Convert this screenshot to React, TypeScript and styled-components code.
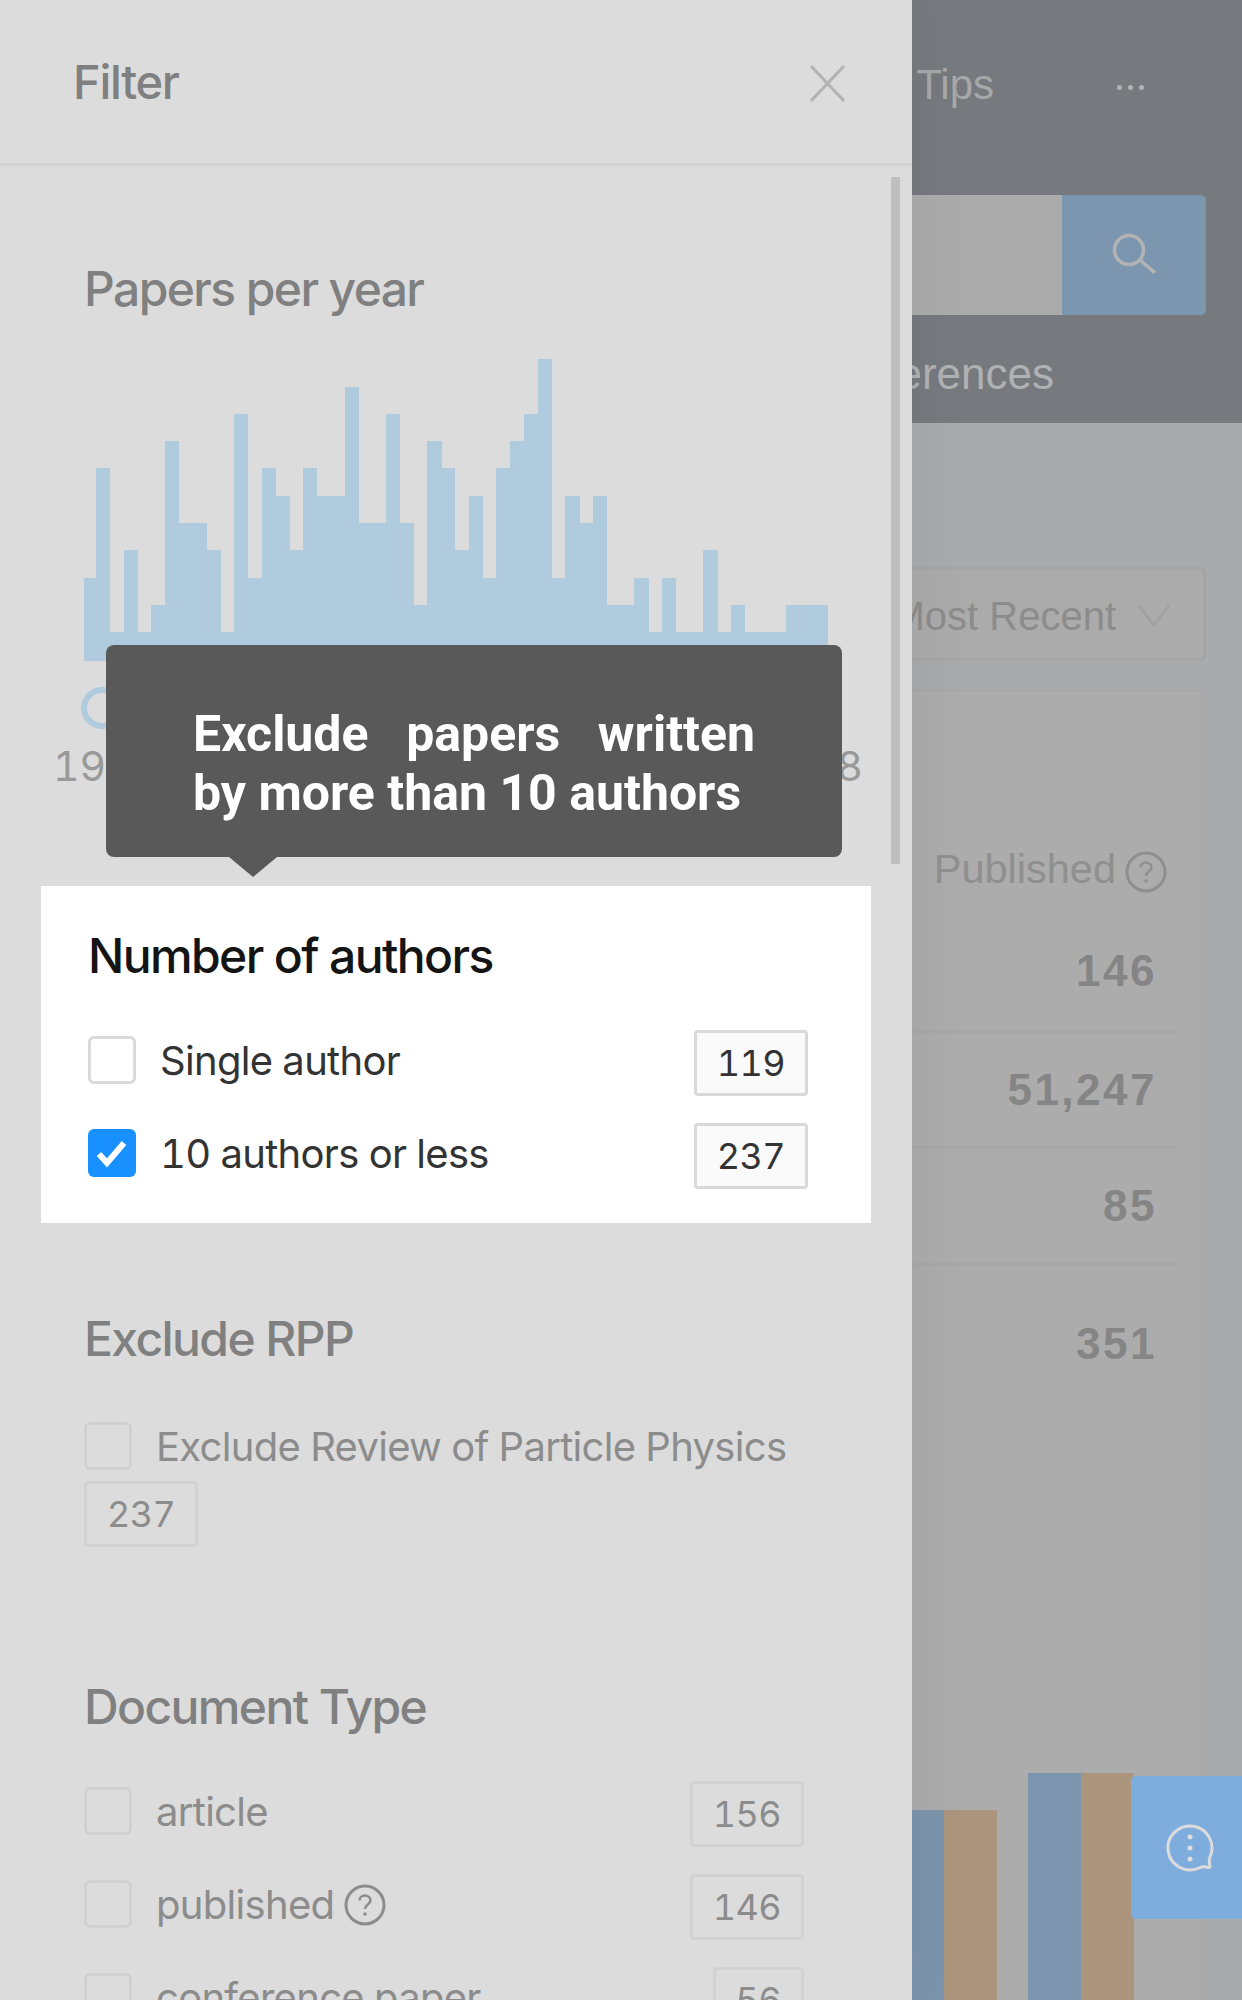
import React from "react"
import styled, { createGlobalStyle } from "styled-components"

const GlobalStyle = createGlobalStyle`
    html, body {
        margin: 0;
        padding: 0;
        background: #a9aaac;
    }
    * {
        box-sizing: border-box;
    }
`

const HISTOGRAM = [
    3, 7, 1, 4, 1, 2, 8, 5, 5, 4, 1, 9, 3, 7, 6, 4, 7, 6, 6, 10, 5, 5, 9, 5, 2, 8, 7,
    4, 6, 3, 7, 8, 9, 11, 3, 6, 5, 6, 2, 2, 3, 1, 3, 1, 1, 4, 1, 2, 1, 1, 1, 2, 2, 2,
]
const BIN_WIDTH = 13.8

const Page = styled.div`
    position: relative;
    width: 1242px;
    height: 2000px;
    overflow: hidden;
    font-family: "Liberation Sans", Arial, sans-serif;
`

/* page behind the drawer */
const BackHeader = styled.header`
    height: 423px;
    background: #767a7e;
`

const TopNav = styled.nav`
    height: 170px;
    display: flex;
    align-items: center;
    justify-content: flex-end;
    gap: 123px;
    padding-right: 98px;
`

const NavLink = styled.span`
    font-size: 42px;
    color: #a6a8a9;
`

const Dots = styled.span`
    display: flex;
    gap: 6px;
    margin-top: 4px;

    i {
        width: 5px;
        height: 5px;
        border-radius: 50%;
        background: #b4b4b4;
    }
`

const SearchBar = styled.div`
    height: 120px;
    margin-top: 25px;
    padding-right: 36px;
    display: flex;
`

const SearchInput = styled.div`
    flex: 1;
    background: #ababab;
`

const SearchButton = styled.div`
    width: 144px;
    background: #7c96af;
    border-radius: 0 5px 5px 0;
    display: flex;
    align-items: center;
    justify-content: center;
`

const BackTitle = styled.div`
    margin-top: 29px;
    padding-right: 188px;
    text-align: right;
    font-size: 44px;
    line-height: 60px;
    color: #b0b1b2;
`

const BackMain = styled.main`
    height: 1577px;
    background: #a9aaac;
    display: flex;
    flex-direction: column;
`

const SortSelect = styled.div`
    height: 94px;
    width: 500px;
    margin: 144px 36px 0 auto;
    padding: 4px 33px 0 0;
    border: 3px solid #a5a5a5;
    border-radius: 5px;
    display: flex;
    align-items: center;
    justify-content: flex-end;
    gap: 22px;
    font-size: 40px;
    color: #8c8c8c;
    background: #ababab;
`

const TableCard = styled.section`
    flex: 1;
    margin: 29px 39px 0 0;
    background: #acacac;
    border: solid #a7a7a7;
    border-width: 2px 2px 0 0;
    display: flex;
    flex-direction: column;
    overflow: hidden;
`

const TableHead = styled.div`
    height: 220px;
    margin-right: 24px;
    padding: 0 10px 19px 0;
    display: flex;
    align-items: flex-end;
    justify-content: flex-end;
    gap: 9px;
    font-size: 41.5px;
    line-height: 48px;
    color: #8f8f8f;
`

const TableRow = styled.div<{ $height: number; $last?: boolean }>`
    height: ${props => props.$height}px;
    margin-right: 24px;
    padding-right: 20px;
    display: flex;
    align-items: center;
    justify-content: flex-end;
    font-size: 44px;
    font-weight: 700;
    letter-spacing: 2.5px;
    color: #858585;
    border-bottom: ${props => (props.$last ? "none" : "3px solid #a7a7a7")};
`

const BarChart = styled.div`
    margin-top: auto;
    height: 227px;
    padding-right: 67px;
    display: flex;
    align-items: flex-end;
    justify-content: flex-end;
    gap: 31px;
`

const BarGroup = styled.div`
    display: flex;
    align-items: flex-end;
`

const Bar = styled.div<{ $tone: "blue" | "tan"; $height: number }>`
    width: 53px;
    height: ${props => props.$height}px;
    background: ${props => (props.$tone === "blue" ? "#7c94ad" : "#ab957c")};
`

const ChatButton = styled.div`
    position: absolute;
    right: 0;
    top: 1776px;
    width: 111px;
    height: 143px;
    padding-left: 6px;
    background: #7eaddd;
    border-radius: 5px 0 0 5px;
    display: flex;
    align-items: center;
    justify-content: center;
`

/* filter drawer */
const Drawer = styled.aside`
    position: absolute;
    left: 0;
    top: 0;
    width: 912px;
    height: 2000px;
    background: #dcdcdc;
    box-shadow: 0 0 60px rgba(0, 0, 0, 0.06);
    overflow: hidden;
    font-family: Inter, "Liberation Sans", sans-serif;
`

const DrawerHeader = styled.div`
    height: 166px;
    padding: 0 67px 0 73px;
    border-bottom: 3px solid #d4d4d4;
    display: flex;
    align-items: center;
    justify-content: space-between;
`

const DrawerTitle = styled.h1`
    margin: 0;
    font-size: 47px;
    font-weight: 500;
    letter-spacing: -1.3px;
    color: #808080;
`

const CloseIcon = styled.svg`
    margin-top: 3px;
`

const Scrollbar = styled.div`
    position: absolute;
    left: 891px;
    top: 177px;
    width: 9px;
    height: 687px;
    background: #bfbfbf;
`

const DrawerBody = styled.div`
    padding: 95px 41px 0;
`

const Section = styled.section<{ $highlight?: boolean; $top?: number }>`
    padding: ${props => props.$top ?? 0}px 67px 0 43px;
    ${props => props.$highlight && "padding: 42px 63px 7px 47px; background: #fff;"}
`

const SectionTitle = styled.h2<{ $highlight?: boolean }>`
    margin: 0 0 46px;
    font-size: 48px;
    line-height: 56px;
    font-weight: 500;
    letter-spacing: -1.6px;
    color: ${props => (props.$highlight ? "#141414" : "#808080")};
`

const Histogram = styled.svg`
    display: block;
    margin-top: -6px;
`

const SliderHandle = styled.div`
    width: 42px;
    height: 42px;
    margin: 26px 0 0 -3px;
    border: 6px solid #b0cbdd;
    border-radius: 50%;
    background: #dcdcdc;
`

const YearLabels = styled.div`
    margin: 15px -59px 98px -31px;
    display: flex;
    justify-content: space-between;
    font-size: 41px;
    line-height: 44px;
    font-feature-settings: "tnum";
    color: #999;
`

const OptionRow = styled.div<{ $wrap?: boolean }>`
    display: flex;
    flex-wrap: ${props => (props.$wrap ? "wrap" : "nowrap")};
    justify-content: space-between;
    align-items: flex-start;
    row-gap: 9px;
    margin: ${props => (props.$wrap ? "49px" : "0")} 0 27px;
`

const OptionLabel = styled.div<{ $highlight?: boolean }>`
    display: flex;
    align-items: flex-start;
    gap: 24px;
    font-size: 40px;
    line-height: 50px;
    letter-spacing: -0.7px;
    font-feature-settings: "tnum";
    color: ${props => (props.$highlight ? "#333" : "#8c8c8c")};
`

const OptionText = styled.span`
    display: flex;
    align-items: center;
    gap: 10px;
    margin-top: 6px;
    white-space: nowrap;
`

const Checkbox = styled.span<{ $checked?: boolean; $highlight?: boolean }>`
    width: 48px;
    height: 48px;
    margin-top: 6px;
    flex: none;
    border-radius: 6px;
    border: ${props => (props.$checked ? "none" : `3px solid ${props.$highlight ? "#d9d9d9" : "#d0d0d0"}`)};
    background: ${props => (props.$checked ? "#1890ff" : "transparent")};
    display: block;
`

const CountBadge = styled.span<{ $highlight?: boolean }>`
    height: 66px;
    padding: 0 20px;
    border-radius: 4px;
    border: 3px solid ${props => (props.$highlight ? "#d9d9d9" : "#d2d2d2")};
    background: ${props => (props.$highlight ? "#fafafa" : "transparent")};
    color: ${props => (props.$highlight ? "#333" : "#8c8c8c")};
    font-size: 36px;
    line-height: 60px;
    letter-spacing: -0.6px;
    font-feature-settings: "tnum";
`

const Tooltip = styled.div`
    position: absolute;
    left: 106px;
    top: 645px;
    width: 736px;
    height: 212px;
    padding: 60px 87px 0;
    background: #595959;
    border-radius: 8px;
    color: #fff;
    font-family: Roboto, "Liberation Sans", sans-serif;
    font-size: 50px;
    font-weight: 700;
    line-height: 59px;
    text-align: justify;

    &::after {
        content: "";
        position: absolute;
        left: 123px;
        top: 100%;
        border-style: solid;
        border-width: 20px 24px 0;
        border-color: #595959 transparent transparent;
    }
`

const HelpIcon = ({ size, color }: { size: number; color: string }) => (
    <svg width={size} height={size} viewBox="0 0 42 42" fill="none">
        <circle cx="21" cy="21" r="19" stroke={color} strokeWidth="3" />
        <path d="M15.5 16.5c0-3 2.4-5 5.5-5s5.5 2 5.5 4.800c0 4.200-5.500 4.200-5.500 8.700" stroke={color} strokeWidth="2.500" />
        <circle cx="21" cy="30" r="1.800" fill={color} />
    </svg>
)

const Option = ({
    label,
    count,
    checked,
    help,
    highlight,
    wrap,
}: {
    label: string
    count: number
    checked?: boolean
    help?: boolean
    highlight?: boolean
    wrap?: boolean
}) => (
    <OptionRow $wrap={wrap}>
        <OptionLabel $highlight={highlight}>
            <Checkbox $checked={checked} $highlight={highlight}>
                {checked && (
                    <svg width="48" height="48" viewBox="0 0 48 48" fill="none">
                        <path d="M11 25l8 9 17-20" stroke="#fff" strokeWidth="6" />
                    </svg>
                )}
            </Checkbox>
            <OptionText>
                {label}
                {help && <HelpIcon size={42} color="#8c8c8c" />}
            </OptionText>
        </OptionLabel>
        <CountBadge $highlight={highlight}>{count}</CountBadge>
    </OptionRow>
)

const App = () => (
    <Page>
        <GlobalStyle />
        <BackHeader>
            <TopNav>
                <NavLink>Tips</NavLink>
                <Dots>
                    <i />
                    <i />
                    <i />
                </Dots>
            </TopNav>
            <SearchBar>
                <SearchInput />
                <SearchButton>
                    <svg width="44" height="44" viewBox="0 0 44 44" fill="none" stroke="#b3b3b3" strokeWidth="3.500">
                        <circle cx="17" cy="17" r="14.500" />
                        <path d="M28 27l15 13" />
                    </svg>
                </SearchButton>
            </SearchBar>
            <BackTitle>References</BackTitle>
        </BackHeader>
        <BackMain>
            <SortSelect>
                Most Recent
                <svg width="32" height="22" viewBox="0 0 32 22" fill="none" stroke="#a0a0a0" strokeWidth="2.500">
                    <path d="M1 1l15 19L31 1" />
                </svg>
            </SortSelect>
            <TableCard>
                <TableHead>
                    Published
                    <HelpIcon size={42} color="#8f8f8f" />
                </TableHead>
                <TableRow $height={121}>146</TableRow>
                <TableRow $height={116}>51,247</TableRow>
                <TableRow $height={117}>85</TableRow>
                <TableRow $height={156} $last>351</TableRow>
                <BarChart>
                    <BarGroup>
                        <Bar $tone="blue" $height={190} />
                        <Bar $tone="tan" $height={190} />
                    </BarGroup>
                    <BarGroup>
                        <Bar $tone="blue" $height={227} />
                        <Bar $tone="tan" $height={227} />
                    </BarGroup>
                </BarChart>
            </TableCard>
        </BackMain>
        <ChatButton>
            <svg width="48" height="48" viewBox="0 0 48 48" fill="none">
                <path
                    d="M44 33A22 22 0 1 0 33 44Q37 42 42 43.500Q44 44 44 42Q42.500 37 44 33Z"
                    stroke="#dcdcdc"
                    strokeWidth="3"
                    strokeLinejoin="round"
                />
                <circle cx="24" cy="13" r="2.500" fill="#dcdcdc" />
                <circle cx="24" cy="24" r="2.500" fill="#dcdcdc" />
                <circle cx="24" cy="35" r="2.500" fill="#dcdcdc" />
            </svg>
        </ChatButton>

        <Drawer>
            <DrawerHeader>
                <DrawerTitle>Filter</DrawerTitle>
                <CloseIcon width="35" height="37" viewBox="0 0 35 37" fill="none" stroke="#b3b3b3" strokeWidth="3">
                    <path d="M1 1l33 35M34 1L1 36" />
                </CloseIcon>
            </DrawerHeader>
            <Scrollbar />
            <DrawerBody>
                <Section>
                    <SectionTitle>Papers per year</SectionTitle>
                    <Histogram width="744" height="304" viewBox="0 0 744 304" shapeRendering="crispEdges">
                        {HISTOGRAM.map((level, i) => {
                            const x = Math.max(0, i * BIN_WIDTH - 1.6)
                            return (
                                <rect
                                    key={i}
                                    x={x}
                                    y={302.500 - level * 27.300}
                                    width={(i + 1) * BIN_WIDTH - 1.6 - x + 0.300}
                                    height={level * 27.300 + 1.500}
                                    fill="#b0cbdd"
                                />
                            )
                        })}
                    </Histogram>
                    <SliderHandle />
                    <YearLabels>
                        <span>1968</span>
                        <span>2018</span>
                    </YearLabels>
                </Section>
                <Section $highlight>
                    <SectionTitle $highlight>Number of authors</SectionTitle>
                    <Option highlight label="Single author" count={119} />
                    <Option highlight checked label="10 authors or less" count={237} />
                </Section>
                <Section $top={88}>
                    <SectionTitle>Exclude RPP</SectionTitle>
                    <Option wrap label="Exclude Review of Particle Physics" count={237} />
                </Section>
                <Section $top={105}>
                    <SectionTitle>Document Type</SectionTitle>
                    <Option label="article" count={156} />
                    <Option help label="published" count={146} />
                    <Option label="conference paper" count={56} />
                </Section>
            </DrawerBody>
        </Drawer>
        <Tooltip>Exclude papers written by more than 10 authors</Tooltip>
    </Page>
)

export default App
